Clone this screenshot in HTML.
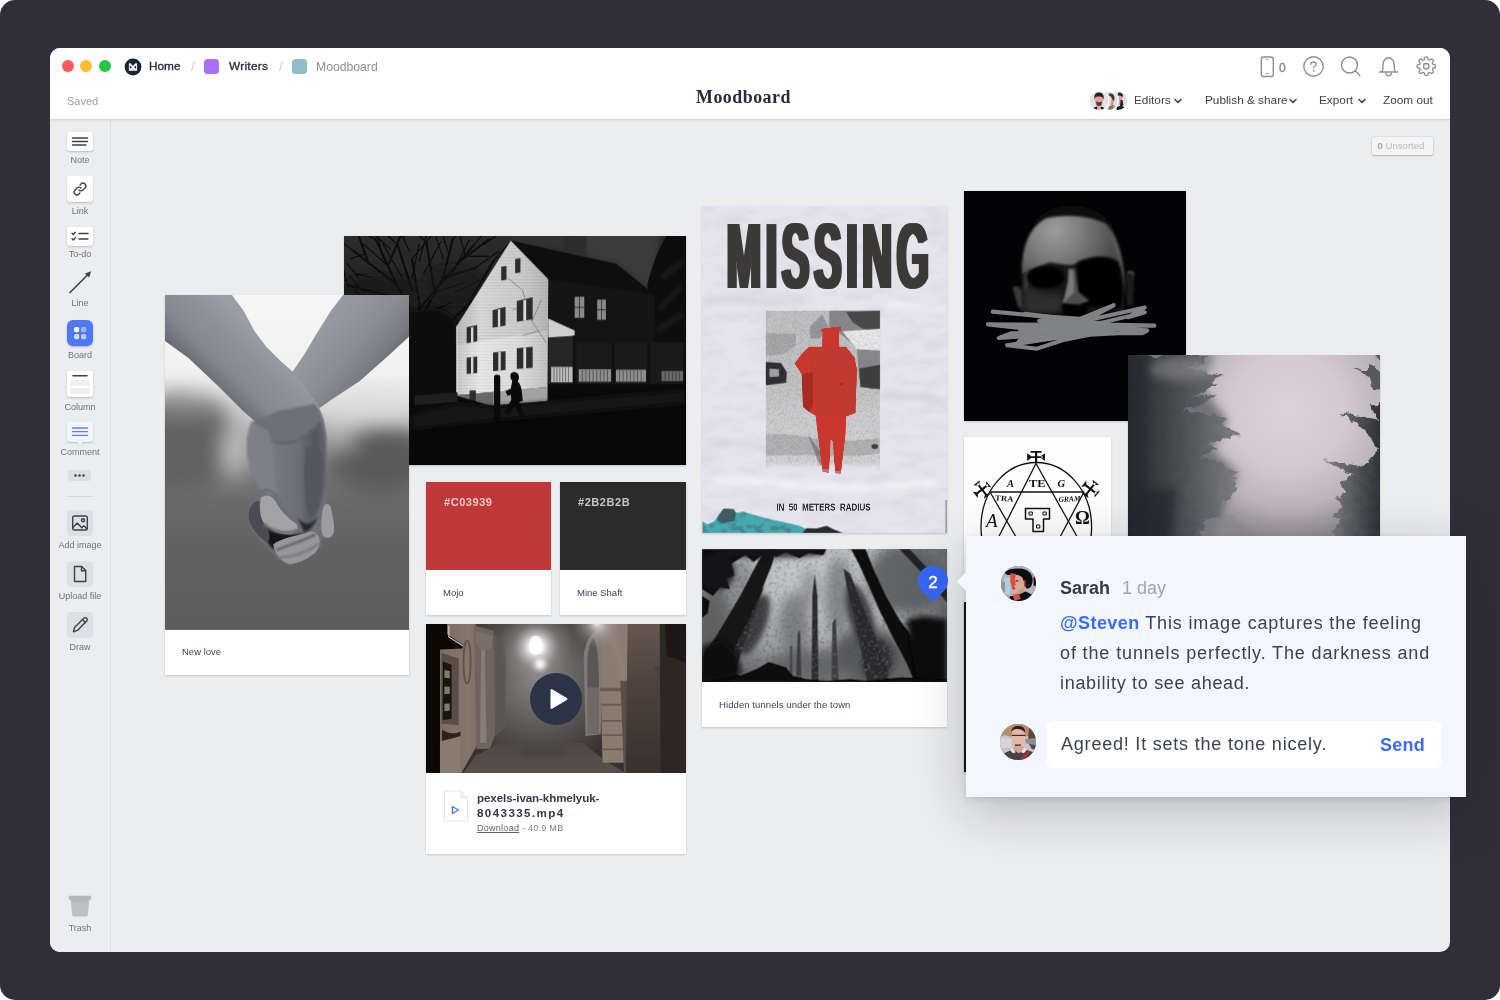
<!DOCTYPE html>
<html lang="en">
<head>
<meta charset="utf-8">
<title>Moodboard</title>
<style>
*{box-sizing:border-box;margin:0;padding:0}
html,body{width:1500px;height:1000px;overflow:hidden;background:#fff}
body{font-family:"Liberation Sans",sans-serif;color:#323b4a;position:relative}
.bg{position:absolute;left:0;top:0;width:1500px;height:1000px;background:#302e39;border-radius:15px}
.win{position:absolute;left:50px;top:48px;width:1400px;height:904px;border-radius:10px;background:#ecedef;overflow:hidden}
.abs{position:absolute}
.t{position:absolute;white-space:nowrap;line-height:1}
.t,.nav,.lbl,.uns{will-change:transform}
.hdr{position:absolute;z-index:3;left:0;top:0;width:1400px;height:72px;background:#fff;border-bottom:1px solid #d3d6da;box-shadow:0 1px 1.500px rgba(0,0,0,.05)}
.side{position:absolute;left:0;top:71px;width:61px;height:833px;border-right:1px solid #dcdde0;background:#ecedef}
.dot{position:absolute;width:12px;height:12px;border-radius:50%;top:12px}
.lbl{position:absolute;left:0;width:60px;text-align:center;font-size:9px;line-height:10px;color:#6b7280;white-space:nowrap}
.tool{position:absolute;left:17px;width:26px;background:#fff;border-radius:3px;box-shadow:0 1px 2px rgba(0,0,0,.22)}
.tool.g{background:#dfe0e3;box-shadow:none;border-radius:4px}
.card{position:absolute;background:#fff;box-shadow:0 1px 2px rgba(0,0,0,.18)}
.card svg{display:block;will-change:transform}
.nav{position:absolute;top:46px;font-size:11.8px;line-height:12px;color:#3a4150;white-space:nowrap}
</style>
</head>
<body>
<div class="bg"></div>
<div class="win">
  <!-- ===== header ===== -->
  <div class="hdr">
    <div class="dot" style="left:12px;background:#fc5b57"></div>
    <div class="dot" style="left:30px;background:#fdbc2e"></div>
    <div class="dot" style="left:49px;background:#27c840"></div>
    <svg class="abs" style="left:74px;top:9.800px" width="18" height="18" viewBox="0 0 18 18"><circle cx="9" cy="9" r="8.400" fill="#1a2338"/><path d="M4.900 5.300h1.700L9 7.900l2.400-2.600h1.700v7.500H4.900z" fill="#fff"/><path d="M5.900 7.300l2 1.900-2 1.900zM12.100 7.300l-2 1.900 2 1.900zM8.200 11.600l.8-.8.800.8z" fill="#1a2338"/></svg>
    <div class="t" id="home" style="left:99px;top:13px;font-size:11.800px;font-weight:400;-webkit-text-stroke:.35px #2b3140;color:#2b3140">Home</div>
    <div class="t" style="left:141px;top:12px;font-size:13px;color:#c9cbd0">/</div>
    <div class="abs" style="left:154px;top:11px;width:15px;height:15px;border-radius:3.5px;background:#aa6ffb"></div>
    <div class="t" id="writers" style="left:179px;top:13px;font-size:11.800px;letter-spacing:.3px;font-weight:400;-webkit-text-stroke:.35px #2b3140;color:#2b3140">Writers</div>
    <div class="t" style="left:228.500px;top:12px;font-size:13px;color:#c9cbd0">/</div>
    <div class="abs" style="left:242px;top:11px;width:15px;height:15px;border-radius:3.5px;background:#91bccb"></div>
    <div class="t" id="mb" style="left:266px;top:13px;font-size:12.2px;color:#8a8f99">Moodboard</div>
    <div class="t" id="saved" style="left:17px;top:48px;font-size:11px;color:#9da1a8">Saved</div>
    <div class="t" id="title" style="left:646px;top:40.500px;font-family:'Liberation Serif',serif;font-weight:700;font-size:17.900px;letter-spacing:.5px;color:#262c3a">Moodboard</div>
    <!-- right icons -->
    <svg class="abs" style="left:1208px;top:7px" width="180" height="24" viewBox="0 0 180 24" fill="none" stroke="#8a8f99" stroke-width="1.4" stroke-linecap="round" stroke-linejoin="round">
      <rect x="3.300" y="2" width="12" height="19.500" rx="2.200"/><path d="M8 18.600h2.600M8.500 4.600h1.600" stroke-width="1"/>
      <circle cx="55.5" cy="11.5" r="9.7"/><path d="M52.9 9.3c0-1.6 1.2-2.5 2.7-2.5s2.6.9 2.6 2.3c0 2-2.6 2-2.6 4" stroke-width="1.3"/><circle cx="55.6" cy="15.9" r=".5" fill="#8a8f99" stroke-width=".8"/>
      <circle cx="91.5" cy="10" r="8"/><path d="M97.3 15.8l4.6 4.6"/>
      <path d="M121.500 17h18.200M124 17c.8-2 1-4 1-7 0-4 2.300-7.300 5.600-7.300s5.600 3.300 5.600 7.300c0 3 .2 5 1 7"/><path d="M128 18.300a2.600 2.600 0 0 0 5.200 0"/>
    </svg>
    <svg class="abs" style="left:1365.500px;top:8.200px" width="20.500" height="20.500" viewBox="0 0 24 24" fill="none" stroke="#8a8f99" stroke-width="1.600" stroke-linecap="round" stroke-linejoin="round"><circle cx="12" cy="12" r="3.2"/><path d="M19.400 15a1.650 1.650 0 0 0 .33 1.820l.060.060a2 2 0 1 1-2.830 2.830l-.060-.060a1.650 1.650 0 0 0-1.820-.33 1.650 1.650 0 0 0-1 1.510V21a2 2 0 0 1-4 0v-.090A1.650 1.650 0 0 0 9 19.400a1.650 1.650 0 0 0-1.820.33l-.060.060a2 2 0 1 1-2.830-2.830l.060-.060a1.650 1.650 0 0 0 .33-1.820 1.650 1.650 0 0 0-1.510-1H3a2 2 0 0 1 0-4h.090A1.650 1.650 0 0 0 4.600 9a1.650 1.650 0 0 0-.33-1.820l-.060-.060a2 2 0 1 1 2.830-2.830l.060.060a1.650 1.650 0 0 0 1.820.33H9a1.650 1.650 0 0 0 1-1.510V3a2 2 0 0 1 4 0v.090a1.650 1.650 0 0 0 1 1.510 1.650 1.650 0 0 0 1.820-.33l.060-.060a2 2 0 1 1 2.830 2.830l-.060.060a1.650 1.650 0 0 0-.33 1.820V9a1.650 1.650 0 0 0 1.510 1H21a2 2 0 0 1 0 4h-.090a1.650 1.650 0 0 0-1.510 1z"/></svg>
    <div class="t" style="left:1229px;top:14px;font-size:12px;color:#7f848e;-webkit-text-stroke:.3px #7f848e">0</div>
    <!-- avatars -->
    <svg class="abs" style="left:1038px;top:42px" width="42" height="22" viewBox="0 0 42 22">
      <defs><clipPath id="ca"><circle cx="11" cy="10.700" r="9.300"/></clipPath><clipPath id="cb"><circle cx="20.400" cy="10.700" r="9.300"/></clipPath><clipPath id="cc"><circle cx="29.800" cy="10.700" r="9.300"/></clipPath>
      <filter id="avb" x="-20%" y="-20%" width="140%" height="140%"><feGaussianBlur stdDeviation=".45"/></filter></defs>
      <g clip-path="url(#cc)"><rect x="20" y="0" width="22" height="22" fill="#dcdfe6"/><g filter="url(#avb)"><path d="M30.500 2.500c2.500-.5 4.300 1 4.500 3.500l-1 1.500c-1.500-1.500-3-2-4.500-2z" fill="#2a2020"/><path d="M31 5.500c1.500 0 2.800.8 3.300 2.300l.2 5.200-1.500 2.500-2.500-.5z" fill="#e9a09a"/><path d="M32.500 10l2 0 .8 4.500-1.800 3-1.500-2z" fill="#33221f"/><path d="M29 17l4.500-1.500 3.500 2.500 1 4h-10z" fill="#1d1a1c"/></g></g>
      <circle cx="20.400" cy="10.700" r="10.300" fill="#fff"/>
      <g clip-path="url(#cb)"><rect x="10" y="0" width="22" height="22" fill="#dcdfe6"/><g filter="url(#avb)"><path d="M21.500 3.500c3-.5 5 1.500 5 4.500l-.5 3-1.500 0c-.5-3-1.500-5-4-6z" fill="#4a3228"/><path d="M23.500 9.500l2 .5 0 3.500-1 2.500-2-1z" fill="#d99880"/><path d="M21 16.500l4-1.500 4.500 3 .5 4h-10z" fill="#8a6a5a"/><path d="M25 16l4 2 1 4h-3z" fill="#cfd2d8"/></g></g>
      <circle cx="11" cy="10.700" r="10.300" fill="#fff"/>
      <g clip-path="url(#ca)"><rect x="0" y="0" width="22" height="22" fill="#e0e3ea"/><g filter="url(#avb)"><path d="M6.300 8c-.3-3.500 1.700-5.500 4.700-5.500s5 2 4.700 5.500l-.7 2-8 0z" fill="#2b2121"/><path d="M6.800 7.500c1.500-1.500 6.500-1.500 8 0l.2 4.500-1.500 3.500-2.500 1.300-2.500-1.300-1.500-3.500z" fill="#ec9f9a"/><path d="M8 11.500c2 .8 4 .8 6 0l-.7 3.700-2.300 1.300-2.300-1.300z" fill="#5a3a34"/><path d="M9 16h4v4h-4z" fill="#eeb0aa"/><path d="M4 21c.5-3 3-4 5-4.500l2 2 2-2c2 .5 4.500 1.500 5 4.500z" fill="#1c191b"/><path d="M9.300 16.500l1.700 2 1.700-2 .3 5h-4z" fill="#f0b8b2"/></g></g>
    </svg>
    <div class="nav" id="n1" style="left:1084px">Editors</div>
    <div class="nav" id="n2" style="left:1155px">Publish &amp; share</div>
    <div class="nav" id="n3" style="left:1269px">Export</div>
    <div class="nav" id="n4" style="left:1333px">Zoom out</div>
    <svg class="abs" style="left:1123px;top:49px" width="10" height="8" viewBox="0 0 10 8" fill="none" stroke="#3a4150" stroke-width="1.6" stroke-linecap="round" stroke-linejoin="round"><path d="M2 2.500l3 3 3-3"/></svg>
    <svg class="abs" style="left:1238px;top:49px" width="10" height="8" viewBox="0 0 10 8" fill="none" stroke="#3a4150" stroke-width="1.6" stroke-linecap="round" stroke-linejoin="round"><path d="M2 2.500l3 3 3-3"/></svg>
    <svg class="abs" style="left:1307px;top:49px" width="10" height="8" viewBox="0 0 10 8" fill="none" stroke="#3a4150" stroke-width="1.6" stroke-linecap="round" stroke-linejoin="round"><path d="M2 2.500l3 3 3-3"/></svg>
  </div>

  <!-- ===== sidebar ===== -->
  <div class="side" id="side">

    <!-- offsets: sidebar top = 119 abs, so y_rel = y_abs-119 -->
    <div class="tool" style="top:13px;height:19px"><svg width="26" height="19" viewBox="0 0 26 19" fill="none" stroke="#3a4150" stroke-width="1.400" stroke-linecap="round"><path d="M5.500 6h15M5.500 9.500h15M5.500 13h13.500"/></svg></div>
    <div class="lbl" style="top:36px">Note</div>
    <div class="tool" style="top:57px;height:26px"><svg width="26" height="26" viewBox="0 0 26 26" fill="none" stroke="#3a4150" stroke-width="1.500" stroke-linecap="round" stroke-linejoin="round"><g transform="translate(13 13) scale(.9) translate(-13 -13)"><path d="M11.800 14.200a3.100 3.100 0 0 0 4.400 0l2.300-2.300a3.100 3.100 0 0 0-4.400-4.400l-1 1"/><path d="M14.200 11.800a3.100 3.100 0 0 0-4.400 0l-2.300 2.300a3.100 3.100 0 0 0 4.400 4.400l1-1"/></g></svg></div>
    <div class="lbl" style="top:87px">Link</div>
    <div class="tool" style="top:108px;height:19px"><svg width="26" height="19" viewBox="0 0 26 19" fill="none" stroke="#3a4150" stroke-width="1.400" stroke-linecap="round" stroke-linejoin="round"><path d="M5 6.200l1.300 1.300 2-2.300M5 11.700l1.300 1.300 2-2.300M12 6.500h9M12 12h9"/></svg></div>
    <div class="lbl" style="top:130px">To-do</div>
    <svg class="abs" style="left:17px;top:150px" width="26" height="26" viewBox="0 0 26 26" fill="none" stroke="#3a4150" stroke-width="1.600" stroke-linecap="round"><path d="M3 23.500L22 4.500"/><path d="M24.200 2.300l-6.300 2.100 4.200 4.200z" fill="#3a4150" stroke="none"/></svg>
    <div class="lbl" style="top:179px">Line</div>
    <div class="tool" style="top:201px;height:26px;background:#4f78f6;border-radius:6px;box-shadow:0 1px 2px rgba(40,70,200,.35)"><svg width="26" height="26" viewBox="0 0 26 26"><rect x="7" y="7" width="5.200" height="5.200" rx="1.600" fill="#fff"/><rect x="14" y="7" width="5.200" height="5.200" rx="1.600" fill="#fff" opacity=".45"/><rect x="7" y="14" width="5.200" height="5.200" rx="1.600" fill="#fff" opacity=".75"/><rect x="14" y="14" width="5.200" height="5.200" rx="1.600" fill="#fff" opacity=".6"/></svg></div>
    <div class="lbl" style="top:231px">Board</div>
    <div class="tool" style="top:252px;height:26px"><svg width="26" height="26" viewBox="0 0 26 26"><path d="M6 4.700h14" stroke="#3a4150" stroke-width="1.400" stroke-linecap="round"/><rect x="3.500" y="9" width="19" height="6" fill="#eeeff1"/><rect x="3.500" y="17" width="19" height="6" fill="#eeeff1"/></svg></div>
    <div class="lbl" style="top:283px">Column</div>
    <div class="tool" style="top:303px;height:20px;background:#f3f6ff"><svg width="26" height="24" viewBox="0 0 26 24" style="overflow:visible"><path d="M10.500 20h5l-2.500 2.600z" fill="#f3f6ff"/><path d="M5.500 6h15M5.500 9.700h15M5.500 13.400h15" stroke="#5b7ff5" stroke-width="1.300" stroke-linecap="round"/></svg></div>
    <div class="lbl" style="top:328px">Comment</div>
    <div class="abs" style="left:18px;top:351px;width:23px;height:11px;border-radius:3px;background:#dddee1"><svg style="display:block" width="23" height="11" viewBox="0 0 23 11" fill="#3a4150"><circle cx="7.500" cy="5.500" r="1.250"/><circle cx="11.500" cy="5.500" r="1.250"/><circle cx="15.500" cy="5.500" r="1.250"/></svg></div>
    <div class="abs" style="left:17px;top:377px;width:26px;height:1px;background:#d6d8db"></div>
    <div class="tool g" style="top:391px;height:26px"><svg width="26" height="26" viewBox="0 0 26 26" fill="none" stroke="#3a4150" stroke-width="1.400" stroke-linecap="round" stroke-linejoin="round"><rect x="5.700" y="6" width="14.600" height="14" rx="2"/><circle cx="16" cy="10.300" r="1.500"/><path d="M5.900 17.500l4.300-4.600 4.600 4.800 2-1.900 3.300 3.200"/></svg></div>
    <div class="lbl" style="top:421px">Add image</div>
    <div class="tool g" style="top:442px;height:26px"><svg width="26" height="26" viewBox="0 0 26 26" fill="none" stroke="#3a4150" stroke-width="1.400" stroke-linecap="round" stroke-linejoin="round"><path d="M7.500 5.500h7.200l4 4v11h-11.200z"/><path d="M14.500 5.700v4h4"/></svg></div>
    <div class="lbl" style="top:472px">Upload file</div>
    <div class="tool g" style="top:493px;height:26px"><svg width="26" height="26" viewBox="0 0 26 26" fill="none" stroke="#3a4150" stroke-width="1.400" stroke-linecap="round" stroke-linejoin="round"><path d="M6.500 19.800l1-4.300 9.300-9.300a2 2 0 0 1 2.900 2.900l-9.300 9.300z"/><path d="M15.500 7.600l2.900 2.900"/></svg></div>
    <div class="lbl" style="top:523px">Draw</div>
    <svg class="abs" style="left:18px;top:776px" width="24" height="23" viewBox="0 0 24 23"><path d="M2.600 4.200h18.800l-1.500 15.600a2 2 0 0 1-2 1.700H6.100a2 2 0 0 1-2-1.700z" fill="#bbbfc6"/><rect x=".8" y=".8" width="22.400" height="4" rx=".8" fill="#b2b6bd"/><path d="M2.700 5.600c5 .6 10 .5 17-.7" stroke="#a9adb5" stroke-width=".8" fill="none"/></svg>
    <div class="lbl" style="top:804px">Trash</div>
  </div>

  <!-- unsorted -->
  <div class="abs uns" style="left:1321.500px;top:88.500px;width:61px;height:18px;border-radius:2.500px;background:#f4f4f5;box-shadow:0 1px 2px rgba(0,0,0,.22),0 0 0 .5px rgba(0,0,0,.08);font-size:9.600px;line-height:17px;padding-left:5.500px;color:#b9bcc2;white-space:nowrap"><b style="color:#a4a8ae">0</b> Unsorted</div>

  <!-- ===== canvas cards ===== -->
  <div id="canvas">

    <!-- coordinates inside .win : x_abs-50 , y_abs-48 -->
    <!-- house photo -->
    <div class="card" id="house" style="left:294px;top:188px;width:342px;height:229px;background:#0b0b0b"><svg class="abs" style="left:0;top:0" width="342" height="229" viewBox="17 25 1424.800 954" preserveAspectRatio="none">
<defs>
<linearGradient id="hsky" x1="0" y1="25" x2="0" y2="700" gradientUnits="userSpaceOnUse"><stop offset="0" stop-color="#2b2b2b"/><stop offset=".35" stop-color="#242424"/><stop offset=".7" stop-color="#111"/><stop offset="1" stop-color="#0a0a0a"/></linearGradient>
<linearGradient id="hfac" x1="487" y1="0" x2="868" y2="0" gradientUnits="userSpaceOnUse"><stop offset="0" stop-color="#c9c9c9"/><stop offset=".25" stop-color="#e9e9e9"/><stop offset=".7" stop-color="#dcdcdc"/><stop offset="1" stop-color="#c4c4c4"/></linearGradient>
<filter id="hsb" filterUnits="userSpaceOnUse" x="-100" y="-100" width="1700" height="1200"><feGaussianBlur stdDeviation="1.800"/></filter>
<filter id="hsb8" filterUnits="userSpaceOnUse" x="-100" y="-100" width="1700" height="1200"><feGaussianBlur stdDeviation="12"/></filter>
<pattern id="hsid" width="20" height="13" patternUnits="userSpaceOnUse"><rect width="20" height="13" fill="none"/><rect y="11" width="20" height="2" fill="#000" opacity=".13"/></pattern>
</defs>
<rect x="17" y="25" width="1425" height="954" fill="url(#hsky)"/>
<!-- lighter sky right -->
<path d="M1020 0H1340L1290 250 1150 140 1025 112z" fill="#3a3a3a" filter="url(#hsb8)"/><path d="M720 0H940V90L720 45z" fill="#303030" filter="url(#hsb8)"/>
<!-- tree branches -->
<g stroke="#090909" fill="none" stroke-linecap="round" filter="url(#hsb)">
<path d="M335 720C330 600 338 450 330 300L300 120M330 420L200 150 150 40M330 380L430 200 470 40M300 250L240 60M330 330L560 60M395 260L360 50M240 230L60 90M270 290L30 230M200 150L250 30M120 140L80 30M430 200L560 160M500 130L620 40M330 480L520 330 640 130M330 520L150 330 40 300M440 400L600 250" stroke-width="8"/>
<path d="M335 720V420" stroke-width="22"/>
<path d="M150 40L120 25M470 40L480 25M560 60L590 25M60 90L20 60M250 30L270 25M200 150L100 60M360 50L330 25M240 60L200 25M395 260L520 220M30 230L17 170M640 130L700 60M520 330L600 300M80 200L30 140M180 120L160 30M300 120L380 25M430 120L400 30M520 100L500 25M330 560L460 470M150 330L60 250M100 260L40 190M260 200L180 60M300 200L330 60M350 180L420 50M470 180L540 40M560 160L660 90M480 260L580 210M400 330L470 300M230 330L120 300M45 120L100 100M140 200L60 180M600 60L650 25M540 110L620 110M210 80L150 25M290 90L260 25M330 130L360 25M450 90L430 25" stroke-width="4.500"/>
</g>
<!-- dark tree mass left-low -->
<g filter="url(#hsb8)"><path d="M17 360C60 330 120 300 200 330 250 300 300 330 330 335 380 310 430 330 470 360L490 400V700H17z" fill="#0c0c0c"/>
<ellipse cx="170" cy="250" rx="170" ry="70" fill="#121212" opacity=".55"/><ellipse cx="470" cy="230" rx="130" ry="90" fill="#121212" opacity=".5"/></g>
<!-- right tree -->
<path d="M1442 25V470H1290C1270 380 1300 300 1280 230C1300 150 1330 70 1360 25z" fill="#101010" filter="url(#hsb)"/>
<path d="M1330 330L1420 240M1340 200L1430 130M1320 420L1430 350" stroke="#2c2c2c" stroke-width="10" filter="url(#hsb8)"/>
<!-- roof & right body -->
<path d="M712 45L1020 112 1150 140 1310 268 1310 460 868 470 868 205z" fill="#0e0e0e"/>
<path d="M868 205L1310 268V640H868z" fill="#141414"/>
<path d="M940 30H1025V113L940 94z" fill="#2d2d2d"/>
<!-- right windows -->
<g fill="#8a8a8a"><rect x="978" y="278" width="40" height="88"/><rect x="1072" y="290" width="36" height="84"/></g>
<g stroke="#1a1a1a" stroke-width="3"><path d="M978 322h40M998 278v88M1072 332h36M1090 290v84"/></g>
<g fill="#3c3c3c"><rect x="990" y="490" width="24" height="82"/><rect x="1078" y="496" width="30" height="76"/><rect x="1225" y="506" width="28" height="66"/></g>
<!-- porch interior -->
<path d="M868 448L975 440V640H868z" fill="#262626"/>
<path d="M985 470H1430V640H985z" fill="#1a1a1a"/>
<!-- facade -->
<path d="M712 45L868 205 865 655 487 688V400z" fill="url(#hfac)"/>
<path d="M712 45L868 205 865 655 487 688V400z" fill="url(#hsid)"/>
<path d="M712 45L868 205 866 420 487 480V400z" fill="#000" opacity=".07"/>
<!-- branch shadows on facade -->
<g stroke="#555" stroke-width="4" fill="none" opacity=".55" filter="url(#hsb)"><path d="M860 470L800 380 760 250 700 200M800 380L840 290M780 320L720 330M830 420L760 440"/></g>
<!-- porch roof lit -->
<path d="M868 368L978 418V440L868 448z" fill="#cfcfcf"/>
<!-- foundation -->
<path d="M487 688L865 655V712L640 730 487 722z" fill="#a2a2a2"/><path d="M487 688L640 675V730L487 722z" fill="#000" opacity=".35"/>
<path d="M487 400V722" stroke="#eee" stroke-width="4"/>
<!-- porch railings -->
<g fill="#bdbdbd"><rect x="880" y="570" width="90" height="64"/></g>
<g fill="#8d8d8d"><rect x="995" y="580" width="135" height="52"/><rect x="1150" y="582" width="125" height="50"/></g>
<rect x="1340" y="587" width="90" height="42" fill="#6a6a6a"/>
<g stroke="#222" stroke-width="3" opacity=".7"><path d="M892 572v60M904 572v60M916 572v60M928 572v60M940 572v60M952 572v60M1010 582v50M1025 582v50M1040 582v50M1055 582v50M1070 582v50M1085 582v50M1100 582v50M1115 582v50M1165 584v48M1180 584v48M1195 584v48M1210 584v48M1225 584v48M1240 584v48M1255 584v48M1355 588v40M1370 588v40M1385 588v40M1400 588v40M1415 588v40"/></g>
<g fill="#101010"><rect x="970" y="440" width="12" height="200"/><rect x="1132" y="470" width="14" height="170"/><rect x="1280" y="470" width="14" height="170"/></g>
<!-- facade windows -->
<g fill="#2c2c2c">
<rect x="672" y="152" width="22" height="58" transform="skewY(-8) translate(0 95)"/>
<rect x="730" y="120" width="22" height="60" transform="skewY(-8) translate(0 103)"/>
<path d="M528 405L572 396V463L528 472zM636 334L690 320V398L636 407zM737 296L803 280V372L737 382z"/>
<path d="M528 532L572 527V596L528 600zM638 510L690 505V583L638 588zM737 492L803 486V574L737 579z"/>
<rect x="540" y="668" width="26" height="52"/>
</g>
<g fill="#d8d8d8"><path d="M546 406L556 404V466L546 468zM658 332L668 330V402L658 404zM764 292L776 289V376L764 378zM546 531L556 530V597L546 598zM660 509L670 508V585L660 586zM764 490L776 489V576L764 577z"/></g>
<!-- ground -->
<path d="M17 700L487 690 640 735 865 712 1442 640V979H17z" fill="#0b0b0b"/>
<path d="M300 770C600 740 1000 720 1442 690V979H300z" fill="#080808"/>
<path d="M300 770L487 725 640 738 865 716 1442 668V720C1000 760 600 790 300 830z" fill="#191919" filter="url(#hsb8)"/>
<!-- fence -->
<path d="M310 690L490 676V715L310 730z" fill="#1f1f1f"/>
<!-- post and figure -->
<rect x="642" y="603" width="26" height="192" rx="9" fill="#0a0a0a"/>
<path d="M722 592c14-2 24 8 24 22 0 8-3 13-6 16 10 8 16 24 18 46l4 36-14 4 0 6 22 52-16 6-26-52-22 40-22-8 30-52-2-22-14 4-8-18 22-12 6-32c-6-6-8-12-8-20 0-10 6-16 12-16z" fill="#0a0a0a"/>
</svg></div>
    <!-- hands card -->
    <div class="card" id="hands" style="left:115px;top:247px;width:244px;height:380px"><svg class="abs" style="left:0;top:0" width="244" height="334.700" viewBox="15 15 717.600 982.300" preserveAspectRatio="none">
<defs>
<linearGradient id="hbg" x1="0" y1="15" x2="0" y2="997" gradientUnits="userSpaceOnUse">
<stop offset="0" stop-color="#f6f6f6"/><stop offset=".24" stop-color="#f1f1f1"/><stop offset=".31" stop-color="#e2e2e2"/><stop offset=".375" stop-color="#c2c2c2"/><stop offset=".44" stop-color="#959595"/><stop offset=".53" stop-color="#787878"/><stop offset=".62" stop-color="#6a6a6a"/><stop offset=".75" stop-color="#626262"/><stop offset="1" stop-color="#5c5c5c"/>
</linearGradient>
<linearGradient id="harmL" x1="120" y1="290" x2="285" y2="120" gradientUnits="userSpaceOnUse">
<stop offset="0" stop-color="#484a53"/><stop offset=".12" stop-color="#686a73"/><stop offset=".4" stop-color="#868891"/><stop offset=".75" stop-color="#90929b"/><stop offset="1" stop-color="#9c9ea7"/>
</linearGradient>
<linearGradient id="harmR" x1="470" y1="110" x2="640" y2="260" gradientUnits="userSpaceOnUse">
<stop offset="0" stop-color="#989aa3"/><stop offset=".5" stop-color="#8b8d96"/><stop offset=".85" stop-color="#787a83"/><stop offset="1" stop-color="#62646d"/>
</linearGradient>
<linearGradient id="hback" x1="260" y1="0" x2="560" y2="0" gradientUnits="userSpaceOnUse"><stop offset="0" stop-color="#787982"/><stop offset=".5" stop-color="#6c6d74"/><stop offset=".8" stop-color="#55565e"/><stop offset="1" stop-color="#62636b"/></linearGradient>
<filter id="hb30" filterUnits="userSpaceOnUse" x="-200" y="-200" width="1200" height="1500"><feGaussianBlur stdDeviation="32"/></filter>
<filter id="hb2" filterUnits="userSpaceOnUse" x="-100" y="-100" width="1000" height="1300"><feGaussianBlur stdDeviation="1.400"/></filter>
<filter id="hb4" filterUnits="userSpaceOnUse" x="-100" y="-100" width="1200" height="1400"><feGaussianBlur stdDeviation="6"/></filter>
<filter id="hb9" filterUnits="userSpaceOnUse" x="-100" y="-100" width="1200" height="1400"><feGaussianBlur stdDeviation="12"/></filter>
</defs>
<rect x="15" y="15" width="718" height="983" fill="url(#hbg)"/>
<g filter="url(#hb30)">
<ellipse cx="50" cy="450" rx="175" ry="150" fill="#626262"/>
<ellipse cx="650" cy="500" rx="155" ry="100" fill="#5a5a5a"/>
<ellipse cx="222" cy="470" rx="34" ry="80" fill="#c4c4c4"/>
<ellipse cx="610" cy="345" rx="130" ry="40" fill="#dedede"/>
<ellipse cx="535" cy="425" rx="36" ry="40" fill="#b8b8b8"/>
<ellipse cx="70" cy="335" rx="120" ry="30" fill="#8c8c8c"/>
</g>
<g filter="url(#hb2)">
<path d="M539 15H733V137L670 195 587 268 503 323 470 347 425 300 390 240 425 189 458 133 503 61z" fill="url(#harmR)"/>
<path d="M15 15H212L246 61 279 122 313 167 358 212 391 240 430 290 464 335 482 380 492 440 440 470 335 440 313 413 279 385 246 357 168 279 84 200 15 150z" fill="url(#harmL)"/>
</g>
<!-- hand detail in 5.555-zoom coords -->
<g transform="translate(191.200 323.500) scale(.5294)">
<g filter="url(#hb4)">
<path d="M150 120C120 180 115 260 130 330 150 420 180 470 195 500 170 540 125 600 130 660 140 720 200 780 260 840 300 880 340 915 370 912 430 900 500 860 535 800L548 762 590 768C612 740 600 680 585 620 565 570 555 520 556 470 566 380 568 270 560 180 555 130 535 70 500 20L300 60z" fill="#6e6f77"/>
<path d="M150 120C120 180 115 260 130 330 150 420 180 470 200 505L300 540 285 400 262 230 240 170z" fill="#7f8087"/>
<path d="M260 225C330 250 440 230 530 120 560 180 568 300 556 470 550 560 520 650 440 705 400 660 330 610 295 530 275 420 262 300 260 225z" fill="url(#hback)"/>
<path d="M450 260C500 240 540 260 548 330 552 450 530 590 470 660 440 560 430 400 450 260z" fill="#55565d"/>
<path d="M215 670C300 750 400 750 450 730 390 765 300 800 270 830 225 790 200 730 215 670z" fill="#141418"/>
<path d="M400 650C440 690 470 700 520 640 500 700 470 730 440 735z" fill="#2a2a2f"/>
</g>
<g filter="url(#hb2)">
<path d="M200 540C230 520 260 525 280 560 310 620 370 670 400 690 412 710 400 735 370 742 320 750 260 730 220 690 195 650 190 590 200 540z" fill="#a2a2a7"/>
<path d="M135 610C150 570 175 555 192 560 188 620 200 670 235 710 250 740 255 770 235 790 200 770 160 730 138 680 130 650 130 630 135 610z" fill="#4c4c52"/>
<path d="M268 800C300 770 400 750 450 738 480 722 505 725 520 755 535 790 520 830 495 852 450 885 400 905 365 910 320 900 280 860 268 800z" fill="#97979c"/>
<path d="M545 600C550 570 580 565 590 600 600 650 612 700 604 735 590 770 560 770 545 750 530 720 535 650 545 600z" fill="#9c9ca1"/>
</g>
<g filter="url(#hb4)" fill="none" stroke-linecap="round">
<path d="M220 690C270 735 350 748 402 722" stroke="#6a6a70" stroke-width="16"/>
<path d="M290 830C360 800 440 780 500 745" stroke="#4a4a50" stroke-width="9"/>
<path d="M300 872C380 870 460 840 515 800" stroke="#77777c" stroke-width="14"/>
<path d="M262 228C330 255 440 235 528 125" stroke="#5f6068" stroke-width="10"/>
<path d="M200 505C230 490 260 500 290 530" stroke="#5d5e65" stroke-width="9"/>
</g>
</g>
</svg>
      <div class="t" style="left:17px;top:352px;font-size:9.500px;color:#3c4350">New love</div>
    </div>
    <!-- swatches -->
    <div class="card" style="left:376px;top:434px;width:125px;height:133px">
      <div class="abs" style="left:0;top:0;width:125px;height:88px;background:#c03939"></div>
      <div class="t" style="left:18px;top:15px;font-size:11px;font-weight:700;color:rgba(255,255,255,.72);letter-spacing:.55px">#C03939</div>
      <div class="t" style="left:17px;top:106px;font-size:9.500px;color:#3c4350">Mojo</div>
    </div>
    <div class="card" style="left:510px;top:434px;width:126px;height:133px">
      <div class="abs" style="left:0;top:0;width:126px;height:88px;background:#2b2b2b"></div>
      <div class="t" style="left:18px;top:15px;font-size:11px;font-weight:700;color:rgba(255,255,255,.72);letter-spacing:.55px">#2B2B2B</div>
      <div class="t" style="left:17px;top:106px;font-size:9.500px;color:#3c4350">Mine Shaft</div>
    </div>
    <!-- video card -->
    <div class="card" id="video" style="left:376px;top:576px;width:260px;height:230px"><svg class="abs" style="left:0;top:0" width="260" height="149" viewBox="22 22 1455 836" preserveAspectRatio="none">
<defs>
<radialGradient id="vfog" cx="650" cy="330" r="520" gradientUnits="userSpaceOnUse"><stop offset="0" stop-color="#8b8786"/><stop offset=".35" stop-color="#6b6766"/><stop offset=".7" stop-color="#4e4a49"/><stop offset="1" stop-color="#38302e"/></radialGradient>
<radialGradient id="vlamp" cx="638" cy="150" r="210" gradientUnits="userSpaceOnUse"><stop offset="0" stop-color="#fff"/><stop offset=".16" stop-color="#fff"/><stop offset=".3" stop-color="#e8e6e6" stop-opacity=".75"/><stop offset=".6" stop-color="#b0acac" stop-opacity=".3"/><stop offset="1" stop-color="#8b8786" stop-opacity="0"/></radialGradient>
<radialGradient id="vlamp2" cx="660" cy="247" r="60" gradientUnits="userSpaceOnUse"><stop offset="0" stop-color="#fff"/><stop offset=".35" stop-color="#f0eeee" stop-opacity=".8"/><stop offset="1" stop-color="#aaa" stop-opacity="0"/></radialGradient>
<radialGradient id="vlamp3" cx="980" cy="22" r="140" gradientUnits="userSpaceOnUse"><stop offset="0" stop-color="#f2eeee"/><stop offset=".4" stop-color="#b5aeac" stop-opacity=".6"/><stop offset="1" stop-color="#8b8786" stop-opacity="0"/></radialGradient>
<linearGradient id="vwallL" x1="100" y1="0" x2="420" y2="0" gradientUnits="userSpaceOnUse"><stop offset="0" stop-color="#7d6c62"/><stop offset=".5" stop-color="#85756c"/><stop offset="1" stop-color="#6a605c"/></linearGradient>
<linearGradient id="vfloor" x1="0" y1="680" x2="0" y2="858" gradientUnits="userSpaceOnUse"><stop offset="0" stop-color="#4c4645"/><stop offset="1" stop-color="#5a4f49"/></linearGradient>
<filter id="vb3" filterUnits="userSpaceOnUse" x="-100" y="-100" width="1700" height="1100"><feGaussianBlur stdDeviation="3.500"/></filter>
<filter id="vb12" filterUnits="userSpaceOnUse" x="-100" y="-100" width="1700" height="1100"><feGaussianBlur stdDeviation="14"/></filter>
<linearGradient id="vwr" x1="0" y1="22" x2="0" y2="858" gradientUnits="userSpaceOnUse"><stop offset="0" stop-color="#65564f"/><stop offset=".45" stop-color="#4c403b"/><stop offset="1" stop-color="#3a302c"/></linearGradient>
</defs>
<rect x="22" y="22" width="1455" height="836" fill="url(#vfog)"/>
<!-- floor -->
<path d="M300 760L440 690H900L1010 780 1140 858H230z" fill="url(#vfloor)" filter="url(#vb3)"/>
<path d="M560 740H790" stroke="#3a3433" stroke-width="14" filter="url(#vb12)"/>
<!-- left wall -->
<g filter="url(#vb3)">
<path d="M100 22H300L310 700 220 858H100z" fill="url(#vwallL)"/>
<path d="M290 30L400 60 410 640 380 720 305 725z" fill="#6f645f"/>
<path d="M330 170L352 160 360 690H325z" fill="#8a7c74"/>
<path d="M300 60L395 90 390 160 330 170 300 120z" fill="#7a6e68"/>
<path d="M400 80L470 140 465 600 410 650z" fill="#5c5655"/>
<ellipse cx="252" cy="235" rx="20" ry="120" fill="none" stroke="#5f534c" stroke-width="10"/>
<!-- window -->
<path d="M108 185L205 215V590L108 580z" fill="#5a4d46"/>
<path d="M116 232L165 250V555L116 560z" fill="#16120f"/>
<path d="M125 280l30 6v40l-30-2zM125 372l30 2v40l-30 2zM125 470l30-2v40l-30 4z" fill="#7d7a78"/>
<path d="M112 615C150 640 190 640 215 625V650L112 680z" fill="#2a221e"/>
<path d="M100 680L215 655V858H100z" fill="#8a7a70"/>
</g>
<!-- far-left black -->
<path d="M22 22H140V80L232 140 225 160 100 165V858H22z" fill="#0a0807"/>
<path d="M150 30V95L230 145" stroke="#c9c5c2" stroke-width="7" fill="none"/>
<!-- right arches -->
<g filter="url(#vb3)">
<path d="M905 240C900 120 950 70 1010 30L1000 640 915 650z" fill="#7f7978"/>
<path d="M925 250C925 150 950 110 960 95 975 130 990 190 990 380H925z" fill="#5a5758"/>
<path d="M925 380H990V640H925z" fill="#6e6968"/>
<path d="M1000 22H1165L1150 340 1130 800H1010L1000 400z" fill="#8b7b71"/>
<path d="M995 380H1140V400H995zM1000 470H1135V480H1000zM1005 560H1132V570H1005zM1008 640H1130V650H1008zM1010 720H1130V730H1010z" fill="#6a5c54"/>
<path d="M1110 340H1160L1150 858H1130z" fill="#5a4d46"/>
<path d="M1150 22H1340V858H1140z" fill="url(#vwr)"/>
<path d="M1300 260L1477 245V340L1330 350z" fill="#4a3f3a"/>
<path d="M1330 22H1477V858H1335z" fill="#2e2523"/>
<path d="M1360 22H1477V240L1370 200z" fill="#1c1513"/>
</g>
<path d="M1000 30C1060 80 1120 200 1130 340" stroke="#a09088" stroke-width="14" fill="none" filter="url(#vb12)" opacity=".6"/>
<!-- lamp glows -->
<rect x="22" y="22" width="1455" height="836" fill="url(#vlamp)"/>
<rect x="22" y="22" width="1455" height="836" fill="url(#vlamp3)"/>
<rect x="22" y="22" width="1455" height="836" fill="url(#vlamp2)"/>
<ellipse cx="636" cy="140" rx="36" ry="52" fill="#fff" filter="url(#vb3)"/>
</svg>
      <div class="abs" style="left:104px;top:49px;width:52px;height:52px;border-radius:50%;background:#2b3447"></div>
      <svg class="abs" style="left:104px;top:49px" width="52" height="52" viewBox="0 0 52 52"><path d="M20.500 17.200v17.600a1 1 0 0 0 1.500.9l14.800-8.800a1 1 0 0 0 0-1.800l-14.800-8.800a1 1 0 0 0-1.500.9z" fill="#fff"/></svg>
      <svg class="abs" style="left:17px;top:166px" width="26" height="32" viewBox="0 0 26 32"><path d="M1.500 1h16.500l6.500 6.500v23.500h-23z" fill="#fff" stroke="#e3e5e9" stroke-width="1"/><path d="M18 1v6.500h6.500" fill="#f3f4f6" stroke="#e3e5e9" stroke-width="1"/><path d="M9.400 16.500v7l6-3.500z" fill="none" stroke="#4a74f5" stroke-width="1.300" stroke-linejoin="round"/></svg>
      <div class="t" id="fn1" style="left:51px;top:168px;font-size:11.600px;letter-spacing:-.1px;font-weight:700;color:#323846">pexels-ivan-khmelyuk-</div>
      <div class="t" id="fn2" style="left:51px;top:183px;font-size:11.600px;letter-spacing:1.4px;font-weight:700;color:#323846">8043335.mp4</div>
      <div class="t" id="dl" style="left:51px;top:200px;font-size:9px;letter-spacing:.27px;color:#7d828c"><span style="text-decoration:underline;color:#5d6370">Download</span> - 40.9 MB</div>
    </div>
    <!-- missing poster -->
    <div class="card" id="poster" style="left:652px;top:158px;width:245px;height:327px;background:#e3e1e9"><svg class="abs" style="left:0;top:0" width="245" height="327" viewBox="33 32 702 933" preserveAspectRatio="none">
<defs>
<filter id="pb2" filterUnits="userSpaceOnUse" x="-100" y="-100" width="1000" height="1200"><feGaussianBlur stdDeviation="2"/></filter>
<filter id="pb8" filterUnits="userSpaceOnUse" x="-100" y="-100" width="1000" height="1200"><feGaussianBlur stdDeviation="9"/></filter>
<filter id="ptex" x="0" y="0" width="100%" height="100%"><feTurbulence type="fractalNoise" baseFrequency=".012 .03" numOctaves="3" seed="4" result="n"/><feColorMatrix in="n" type="matrix" values="0 0 0 0 .45  0 0 0 0 .43  0 0 0 0 .5  0 0 0 -1.600 .95"/></filter>
<filter id="pgrain" x="0" y="0" width="100%" height="100%"><feTurbulence type="fractalNoise" baseFrequency=".35" numOctaves="2" seed="9" result="n"/><feColorMatrix in="n" type="matrix" values="0 0 0 0 .1  0 0 0 0 .1  0 0 0 0 .1  0 0 0 -2.200 1.250"/><feComposite in2="SourceGraphic" operator="in"/></filter>
<linearGradient id="pph" x1="0" y1="330" x2="0" y2="800" gradientUnits="userSpaceOnUse"><stop offset="0" stop-color="#c4c4c6"/><stop offset=".3" stop-color="#cfcfd1"/><stop offset=".6" stop-color="#d2d2d4"/><stop offset="1" stop-color="#dddce1"/></linearGradient>
<filter id="pdil" filterUnits="userSpaceOnUse" x="60" y="40" width="680" height="270"><feMorphology operator="dilate" radius="7 0"/></filter>
<filter id="pgrain2" x="0" y="0" width="100%" height="100%"><feTurbulence type="fractalNoise" baseFrequency=".018 .024" numOctaves="3" seed="5" result="n"/><feColorMatrix in="n" type="matrix" values="0 0 0 0 .08  0 0 0 0 .12  0 0 0 0 .14  0 0 0 6 -3.100"/><feComposite in2="SourceGraphic" operator="in"/></filter>
</defs>
<rect x="33" y="32" width="702" height="933" fill="#e6e4ec"/>
<rect x="33" y="32" width="702" height="933" filter="url(#ptex)" opacity=".28"/>
<!-- soft wrinkles -->
<g filter="url(#pb8)" opacity=".55"><path d="M40 300C150 280 200 330 330 300" stroke="#c4c1cc" stroke-width="14" fill="none"/><path d="M560 560C620 590 680 560 730 600" stroke="#c9c6d0" stroke-width="16" fill="none"/><path d="M40 700C100 720 180 690 230 740" stroke="#cbc8d2" stroke-width="14" fill="none"/><path d="M60 820C200 800 400 860 700 820" stroke="#fff" stroke-width="18" fill="none"/><path d="M560 320C640 300 700 340 735 320" stroke="#fff" stroke-width="16" fill="none"/></g>
<!-- MISSING -->
<text x="104" y="267" textLength="592" lengthAdjust="spacingAndGlyphs" letter-spacing="30" font-family="'Liberation Sans',sans-serif" font-weight="700" font-size="264" fill="#3b3939" filter="url(#pdil)">MISSING</text>
<!-- inner photo -->
<g transform="translate(171.400 299.900) scale(.6854)">
<rect x="65" y="45" width="477" height="665" fill="url(#pph)"/>
<g filter="url(#pb2)">
<path d="M330 45H542V370L500 372 455 330 445 200 390 150 330 120z" fill="#8a8a8c"/>
<path d="M400 50L542 45V135L470 120 430 95z" fill="#4a4a4c"/>
<path d="M250 110L300 60 330 120 290 160 250 160z" fill="#9a9a9c"/>
<path d="M385 130L542 120V210L445 205z" fill="#ececee"/>
<path d="M455 285L542 270V372L460 362z" fill="#3c3c3e"/>
<path d="M65 140H190V190L140 225 65 232z" fill="#a9a9ab"/>
<path d="M65 258L128 262 152 300 150 345 65 355z" fill="#2e2e30"/>
<path d="M80 285l40 4v30l-40 2z" fill="#a5a5a7"/>
<path d="M65 560C200 545 300 610 540 575V640C400 660 200 640 65 650z" fill="#b4b4b6"/>
<path d="M240 560L300 640 330 700 290 690z" fill="#707072" opacity=".7"/>
<ellipse cx="520" cy="610" rx="14" ry="10" fill="#3a3a3c"/>
</g>
<rect x="65" y="45" width="477" height="665" fill="#000" filter="url(#pgrain)" opacity=".35"/>
<path d="M65 690H542V720H65z" fill="#e6e4ec" filter="url(#pb8)"/>
<!-- red figure -->
<g fill="#c9372e">
<path d="M296 120L380 110 378 128 370 130 372 200 300 200 302 132 296 132z"/>
<path d="M245 195L400 195 436 240 446 290 440 470 400 486 270 480 245 466 220 445 215 310 185 265 215 225z"/>
<path d="M272 478L400 484 398 560 380 712 354 712 345 590 336 580 330 705 300 702z"/>
</g>
<g fill="#8c211b" opacity=".55"><path d="M215 310L260 300 262 440 246 466 220 445z"/><path d="M300 700L330 705 328 720 302 716zM354 712L380 712 378 724 356 722z"/><circle cx="380" cy="350" r="6"/></g>
<path d="M245 195L400 195 436 240 446 290 440 470 400 486 270 480" fill="#d9483c" opacity=".35" filter="url(#pgrain)"/>
</g>
<!-- caption -->
<text x="246" y="901" textLength="270" lengthAdjust="spacingAndGlyphs" font-family="'Liberation Sans',sans-serif" font-weight="700" font-size="29" fill="#2f2d33" word-spacing="8">IN 50 METERS RADIUS</text>
<!-- teal tear (6x-zoom coords) -->
<g transform="translate(28.400 842.500) scale(.476)">
<path d="M12 178L40 198 80 184 108 146 140 104 200 108 216 128 262 124 330 144 420 170 520 190 600 210 650 224 700 224 760 208 800 228 866 257H12z" fill="#f4f2f8" filter="url(#pb2)"/>
<path d="M12 185L40 205 80 190 110 150 140 110 200 115 215 135 260 130 330 150 420 175 520 195 600 215 640 235 615 258H12z" fill="#45a9b0"/>
<path d="M110 150L140 110 200 115 215 140 205 185 130 200 100 180z" fill="#3b5c63"/>
<path d="M12 185L40 205 80 190 110 150 140 110 200 115 215 135 260 130 330 150 420 175 520 195 600 215 640 235 615 258H12z" fill="#000" filter="url(#pgrain2)" opacity=".5"/>
<path d="M612 258L640 228 700 230 760 214 800 234 862 258z" fill="#2a2a31"/>
<path d="M1479 60V258" stroke="#2b2b33" stroke-width="5" opacity=".75"/>
</g>
</svg></div>
    <!-- forest card -->
    <div class="card" id="forest" style="left:652px;top:501px;width:245px;height:178px"><svg class="abs" style="left:0;top:0" width="245" height="133" viewBox="25 25 1446 782" preserveAspectRatio="none">
<defs>
<radialGradient id="rsky" cx="700" cy="200" r="800" gradientUnits="userSpaceOnUse" gradientTransform="translate(0 40) scale(1 .8)"><stop offset="0" stop-color="#cdcfd2"/><stop offset=".4" stop-color="#babcbf"/><stop offset=".75" stop-color="#97999c"/><stop offset="1" stop-color="#66686a"/></radialGradient>
<filter id="rb4" filterUnits="userSpaceOnUse" x="-100" y="-100" width="1700" height="1100"><feGaussianBlur stdDeviation="4"/></filter>
<filter id="rb14" filterUnits="userSpaceOnUse" x="-100" y="-100" width="1700" height="1100"><feGaussianBlur stdDeviation="16"/></filter>
<filter id="rb30" filterUnits="userSpaceOnUse" x="-200" y="-200" width="1900" height="1300"><feGaussianBlur stdDeviation="34"/></filter>
<filter id="rfol" filterUnits="userSpaceOnUse" x="25" y="25" width="1446" height="782"><feTurbulence type="fractalNoise" baseFrequency=".055" numOctaves="4" seed="11" result="n"/><feColorMatrix in="n" type="matrix" values="0 0 0 0 .12  0 0 0 0 .12  0 0 0 0 .13  0 0 0 5 -2.600"/><feGaussianBlur stdDeviation="2.500"/></filter>
<radialGradient id="rfm" cx="700" cy="250" r="700" gradientUnits="userSpaceOnUse" gradientTransform="translate(0 60) scale(1 .75)"><stop offset="0" stop-color="#fff" stop-opacity=".12"/><stop offset=".5" stop-color="#fff" stop-opacity=".4"/><stop offset="1" stop-color="#fff" stop-opacity=".7"/></radialGradient><mask id="rmk"><rect x="25" y="25" width="1446" height="782" fill="url(#rfm)"/></mask>
</defs>
<rect x="25" y="25" width="1446" height="782" fill="url(#rsky)"/>
<!-- foggy crowns -->
<g filter="url(#rb30)" fill="#737578">
<ellipse cx="570" cy="470" rx="90" ry="190" opacity=".85"/><ellipse cx="660" cy="250" rx="50" ry="120" opacity=".6"/>
<ellipse cx="830" cy="300" rx="80" ry="230" opacity=".8"/><ellipse cx="1230" cy="200" rx="230" ry="200" fill="#55575a" opacity=".85"/>
<ellipse cx="270" cy="330" rx="90" ry="230" opacity=".55"/><ellipse cx="100" cy="440" rx="90" ry="200" fill="#555" opacity=".8"/>
<ellipse cx="1000" cy="640" rx="200" ry="150" fill="#4a4c4e" opacity=".9"/>
<ellipse cx="700" cy="700" rx="300" ry="80" fill="#5a5c5e" opacity=".8"/>
</g>
<!-- far trunks -->
<g filter="url(#rb4)">
<path d="M676 300L690 170 706 300 712 807H672z" fill="#2b2c2e"/>
<path d="M590 520L604 500 612 807H580z" fill="#3a3b3d"/>
<path d="M795 460L815 430 830 807H790z" fill="#3c3d3f"/>
<path d="M545 600L556 590 560 807H540z" fill="#444547"/>
<!-- mid foliage trunk -->
<path d="M860 140L900 170 960 330 1040 520 1110 700 1130 807H1000L960 600 920 400 880 250z" fill="#2a2b2d"/>
<!-- left secondary trunk -->
<path d="M330 300L390 250 300 500 200 807H110L220 560z" fill="#232425"/>
</g>
<g filter="url(#rb14)" fill="#2a2b2d" opacity=".85">
<ellipse cx="960" cy="420" rx="70" ry="200" transform="rotate(-16 960 420)"/>
<ellipse cx="1060" cy="680" rx="90" ry="130"/>
<ellipse cx="330" cy="470" rx="70" ry="190" transform="rotate(22 330 470)"/>
</g>
<g mask="url(#rmk)"><rect x="25" y="25" width="1446" height="782" filter="url(#rfol)"/></g>
<!-- big left trunk -->
<path d="M400 25H462L440 110 380 260 300 440 200 640 130 807H25V660L120 520 250 300 350 110z" fill="#141415" filter="url(#rb4)"/>
<!-- big right trunk -->
<path d="M905 25H990L1040 150 1110 300 1190 440 1280 560 1360 700 1420 807H1280L1230 690 1150 540 1070 380 1000 220 950 110z" fill="#0b0b0c" filter="url(#rb4)"/>
<!-- right thin trunk -->
<path d="M1190 25H1250L1330 110 1471 260V340L1380 230 1290 130z" fill="#222325" filter="url(#rb4)"/>
<!-- right dark foliage -->
<path d="M1230 440L1330 420 1471 440V807H1300z" fill="#0c0c0d" filter="url(#rb14)"/>
<!-- top-left leaves -->
<g filter="url(#rb4)" fill="#101011">
<path d="M25 25H760L740 60 650 50 600 80 520 45 470 70 380 60 330 100 280 60 200 110 215 180 170 200 190 260 130 250 90 300 25 260z"/>
<path d="M25 300L70 330 60 400 25 430z"/>
</g>
<g filter="url(#rb14)" fill="#18181a" opacity=".8"><ellipse cx="110" cy="160" rx="110" ry="110"/><ellipse cx="420" cy="45" rx="330" ry="32"/></g>
<!-- bottom bushes -->
<path d="M25 740L130 700 250 770 350 730 420 690 520 720 560 770 640 790 760 800 900 790 1000 800 1200 780 1471 790V807H25z" fill="#070708" filter="url(#rb4)"/>
<path d="M25 600L140 560 230 640 260 760 25 807z" fill="#0d0d0e" filter="url(#rb14)"/>
</svg>
      <div class="t" style="left:17px;top:151px;font-size:9.500px;letter-spacing:.09px;color:#3c4350">Hidden tunnels under the town</div>
    </div>
    <!-- face -->
    <div class="card" id="face" style="left:914px;top:143px;width:222px;height:230px;background:#030305"><svg class="abs" style="left:0;top:0" width="222" height="230" viewBox="15 20 927 957" preserveAspectRatio="none">
<defs>
<radialGradient id="ffh" cx="430" cy="200" r="260" gradientUnits="userSpaceOnUse" gradientTransform="translate(0 60) scale(1 .7)"><stop offset="0" stop-color="#7c7c7c"/><stop offset=".45" stop-color="#5e5e5e"/><stop offset=".8" stop-color="#333"/><stop offset="1" stop-color="#101010"/></radialGradient>
<filter id="fb6" filterUnits="userSpaceOnUse" x="-300" y="-300" width="1900" height="1900"><feGaussianBlur stdDeviation="12"/></filter>
<filter id="fb14" filterUnits="userSpaceOnUse" x="-300" y="-300" width="1900" height="1900"><feGaussianBlur stdDeviation="28"/></filter>
<radialGradient id="ffh2" cx="390" cy="250" r="520" gradientUnits="userSpaceOnUse"><stop offset="0" stop-color="#9c9c9d"/><stop offset=".35" stop-color="#7e7e7f"/><stop offset=".7" stop-color="#5a5a5b"/><stop offset="1" stop-color="#3c3c3d"/></radialGradient>
<filter id="fb4" filterUnits="userSpaceOnUse" x="-200" y="-200" width="1600" height="1600"><feGaussianBlur stdDeviation="7"/></filter>
</defs>
<rect x="15" y="20" width="927" height="957" fill="#030305"/>
<g transform="translate(166.600 37.500) scale(.5833)">
<!-- hair -->
<path d="M230 210C300 90 500 30 680 110 760 150 800 200 820 260 700 150 400 120 230 210z" fill="#0d0d0e" filter="url(#fb6)"/>
<!-- head base -->
<path d="M150 560C140 380 200 210 330 155 480 120 660 140 770 210 850 300 890 480 890 700L880 830H165z" fill="#161617" filter="url(#fb6)"/>
<!-- forehead lit -->
<path d="M158 560C150 400 200 230 330 165 480 130 650 150 760 205 820 300 860 420 862 520 800 440 700 420 560 470 520 520 470 490 350 480 220 505 158 560z" fill="url(#ffh2)" filter="url(#fb4)"/>
<!-- right temple rim -->
<path d="M770 215C850 320 890 480 890 690 870 560 840 420 800 330z" fill="#5c5c5c" filter="url(#fb6)"/>
<!-- left cheek -->
<path d="M165 620C200 690 330 720 450 700L440 840H170z" fill="#2d2d2e" filter="url(#fb14)"/>
<path d="M170 560L215 515 200 640 175 700z" fill="#3c3c3d" filter="url(#fb6)"/>
<!-- eye sockets -->
<ellipse cx="325" cy="585" rx="135" ry="78" fill="#040405" filter="url(#fb6)"/>
<path d="M545 500C620 440 760 420 840 470 880 560 880 700 860 800H640L560 700z" fill="#050506" filter="url(#fb6)"/>
<!-- nose -->
<path d="M488 520L535 525 560 690 640 755 560 785 440 775 468 700 486 610z" fill="#4e4e4f" filter="url(#fb4)"/>
<path d="M492 530L522 535 530 690 470 750 450 770 470 700 488 610z" fill="#7a7a7b" filter="url(#fb4)"/>
<path d="M440 775L560 785 640 758 610 850H450z" fill="#050506" filter="url(#fb4)"/>
<!-- ears -->
<path d="M88 660C100 640 140 650 152 680L160 820 125 790z" fill="#3a3a3b" filter="url(#fb4)"/>
<path d="M900 560C920 535 960 545 958 580L950 780 905 790z" fill="#1e1e1f" filter="url(#fb4)"/>
<path d="M912 552C930 540 955 548 956 570" stroke="#6a6a6a" stroke-width="10" fill="none" filter="url(#fb4)"/>
</g>
<!-- scribble -->
<g fill="none" stroke="#808285" stroke-linecap="round" stroke-linejoin="round" stroke-width="17">
<path d="M135 522L330 540 500 552 640 495 520 560 770 505 700 545 770 525 560 575 810 580 115 575 250 590 520 588 780 600 760 612 430 610 210 612 160 632 300 622 480 600 640 600 330 640 195 662 320 676 430 640 540 618 700 610"/>
<path d="M270 532L500 560 330 560 600 570 300 580 700 590 250 604 600 610 380 625 250 640 240 655 400 630" stroke-width="19"/>
</g>
</svg></div>
    <!-- symbol -->
    <div class="card" id="symbol" style="left:914px;top:389px;width:147px;height:147px"><svg class="abs" style="left:0;top:0" width="147" height="147" viewBox="0 0 147 147">
<defs><g id="xp"><path d="M-1 -7.500h2v15h-2zM-7.500 -1h15v2h-15zM-4.200 -8.600l4.200 3.400 4.200-3.400zM-4.200 8.600l4.200-3.400 4.200 3.400zM-8.600 -4.200l3.400 4.200-3.400 4.200zM8.600 -4.200l-3.400 4.200 3.400 4.200z"/></g></defs>
<rect width="147" height="147" fill="#fdfdfd"/>
<g fill="none" stroke="#111" stroke-width="1.300" stroke-linejoin="round">
<ellipse cx="72.300" cy="90" rx="55.300" ry="64.500"/>
<path d="M10.700 147L72 26.500 139.600 147"/>
<path d="M79.200 147L26 55H120L71 147"/>
</g>
<g fill="#111">
<path d="M71 14h2.200v12h-2.200zM66.500 14h11v1.700h-11zM63.200 16.200l3.600 2.600v2.400l-3.600 2.800zM81 16.200l-3.600 2.600v2.400l3.600 2.800zM66 19.200h12.500v1.800h-12.500z"/>
<use href="#xp" transform="translate(18 52.500) rotate(-38)"/>
<use href="#xp" transform="translate(126.500 52) rotate(38)"/>
</g>
<g font-family="'Liberation Serif',serif" font-weight="700" fill="#111">
<text x="43" y="50" font-size="10.500" font-style="italic">A</text>
<text x="65" y="50" font-size="9.500" textLength="16.500" lengthAdjust="spacingAndGlyphs">TE</text>
<text x="93.500" y="50" font-size="10.500" font-style="italic">G</text>
<text x="31" y="64" font-size="7.800" textLength="18.500" lengthAdjust="spacingAndGlyphs" transform="rotate(5 40 62)">TRA</text>
<text x="94.500" y="64.500" font-size="7.600" font-style="italic" textLength="22" lengthAdjust="spacingAndGlyphs" transform="rotate(-3 106 62)">GRAM</text>
<text x="22" y="89.500" font-size="19" font-style="italic" font-weight="400">A</text>
<text x="111" y="87" font-size="18.500">Ω</text>
</g>
<g fill="none" stroke="#111" stroke-width="1.500" stroke-linejoin="round">
<path d="M61.500 71.500H85.500V82H79.500V94.500H69V82H61.500z"/>
<rect x="65" y="75" width="3.300" height="3" stroke-width="1"/><rect x="79" y="75" width="3.300" height="3" stroke-width="1"/><rect x="72.500" y="88" width="3.300" height="3" stroke-width="1"/>
</g>
</svg></div>
    <!-- hidden dark image behind popup -->
    <div class="card" style="left:914px;top:554px;width:200px;height:170px;background:#121214"></div>
    <!-- fog -->
    <div class="card" id="fog" style="left:1078px;top:307px;width:252px;height:200px;background:#cfc6cb"><svg class="abs" style="left:0;top:0" width="252" height="200" viewBox="40 50 1260 1000" preserveAspectRatio="none">
<defs>
<radialGradient id="gfog" cx="840" cy="330" r="640" gradientUnits="userSpaceOnUse"><stop offset="0" stop-color="#dcd1d6"/><stop offset=".45" stop-color="#d3c9ce"/><stop offset=".75" stop-color="#bcb4b9"/><stop offset="1" stop-color="#918d92"/></radialGradient>
<linearGradient id="gfl" x1="40" y1="0" x2="620" y2="0" gradientUnits="userSpaceOnUse"><stop offset="0" stop-color="#262c30"/><stop offset=".3" stop-color="#3b4144"/><stop offset=".6" stop-color="#585c5f"/><stop offset="1" stop-color="#858488"/></linearGradient>
<linearGradient id="gfr" x1="1000" y1="0" x2="1300" y2="0" gradientUnits="userSpaceOnUse"><stop offset="0" stop-color="#8e8c90"/><stop offset=".5" stop-color="#5c5f62"/><stop offset="1" stop-color="#2c3236"/></linearGradient>
<filter id="gdis" filterUnits="userSpaceOnUse" x="-100" y="-100" width="1600" height="1300"><feTurbulence type="fractalNoise" baseFrequency=".025" numOctaves="3" seed="3" result="n"/><feDisplacementMap in="SourceGraphic" in2="n" scale="46" xChannelSelector="R" yChannelSelector="G"/><feGaussianBlur stdDeviation="2.500"/></filter>
<filter id="gb20" filterUnits="userSpaceOnUse" x="-200" y="-200" width="1800" height="1500"><feGaussianBlur stdDeviation="24"/></filter>
</defs>
<rect x="40" y="50" width="1260" height="1000" fill="url(#gfog)"/>
<path d="M40 50H470L400 200 540 380 460 520 590 640 520 800 440 1050H40z" fill="#50555a" opacity=".7" filter="url(#gb20)"/>
<g filter="url(#gdis)">
<path d="M0 50H440L400 90 330 110 420 130 515 150 450 185 490 200 410 235 360 260 480 250 400 300 300 330 420 345 545 365 500 395 550 420 600 445 520 470 440 500 490 520 400 560 480 580 530 610 600 630 560 670 575 720 545 770 500 790 440 830 400 880 370 950 360 1100H0z" fill="url(#gfl)"/>
<path d="M420 880C470 860 540 830 580 860 600 900 640 930 650 1100H380z" fill="#8f8d91" opacity=".6"/>
<path d="M1340 50V1100H1130L1060 930 1100 880 1060 870 1110 800 1080 760 1130 740 1100 690 1160 650 1090 620 1010 570 1120 590 1220 610 1260 560 1290 520 1270 480 1210 420 1100 340 1200 360 1290 380 1260 300 1340 280z" fill="url(#gfr)"/>
<path d="M1340 30L1265 50 1300 80 1340 90zM1340 220L1270 215 1235 150 1160 120 1240 125 1240 100 1340 140z" fill="#565a5d"/>
</g>
<g filter="url(#gb20)" opacity=".35" fill="#b9b2b6"><ellipse cx="300" cy="120" rx="160" ry="60"/></g>
<path d="M40 50H130V1050H40z" fill="#23292d" opacity=".6" filter="url(#gb20)"/>
<path d="M40 720H280L240 1050H40z" fill="#23292d" opacity=".8" filter="url(#gb20)"/>
</svg></div>
    <!-- comment pin -->
    <svg class="abs" style="left:866px;top:516px" width="34" height="40" viewBox="0 0 34 40"><path d="M16.900 38L6.300 27.500a15.100 15.100 0 1 1 21.200 0z" fill="#3567f5"/></svg>
    <div class="t" style="left:866px;top:525.800px;width:33.800px;text-align:center;font-size:17px;font-weight:400;color:#fff;-webkit-text-stroke:.45px #fff">2</div>
  </div>
</div>
<!-- popup placeholder -->
<div id="popup" class="abs" style="left:966px;top:536px;width:500px;height:261px;background:#f4f6fe;box-shadow:0 14px 50px rgba(20,20,40,.24),0 2px 8px rgba(20,20,40,.1)">
  <svg class="abs" style="left:-10px;top:34.700px" width="11" height="21" viewBox="0 0 11 21"><path d="M11 0v21L.8 10.500z" fill="#f4f6fe"/></svg>
  <div class="abs" id="av1" style="left:35px;top:30px;width:35px;height:35px;border-radius:50%;overflow:hidden;background:#5b4a48"><svg width="35" height="35" viewBox="135 115 690 695" style="display:block"><defs><filter id="a1b" filterUnits="userSpaceOnUse" x="0" y="0" width="1000" height="1000"><feGaussianBlur stdDeviation="13"/></filter></defs>
<rect x="135" y="115" width="690" height="695" fill="#b9b2b7"/>
<g filter="url(#a1b)">
<path d="M200 350h110v330h-110z" fill="#a9d3e2"/><path d="M135 430h80v200h-80z" fill="#9c9498"/>
<path d="M690 250h140v150h-140z" fill="#b09a98"/><path d="M780 340h45v170h-45z" fill="#0c0c0c"/>
<path d="M330 270L520 280 610 520 530 610 400 615 340 500 318 380z" fill="#d8a88f"/>
<path d="M205 230C300 170 420 150 560 170 700 200 770 300 760 420 750 520 700 580 640 560 600 520 590 420 560 350 500 290 400 270 300 295 240 300 205 270 205 230z" fill="#111113"/>
<path d="M318 255L430 275 405 400 425 480 360 565 318 430z" fill="#e0483e"/>
<path d="M420 400h60v22h-60z" fill="#3a2a2a"/>
<path d="M355 535L425 548 380 590z" fill="#c41d18"/>
<path d="M470 600L600 555 610 650 500 690z" fill="#c99a82"/>
<path d="M590 400l30 0 0 120-30 0z" fill="#c43a30"/>
<path d="M300 720L470 690 620 620 745 680 700 780 500 815 320 790z" fill="#111113"/>
<path d="M365 690L480 655 525 770 400 800z" fill="#e0504a"/>
</g></svg></div>
  <div class="t" id="sarah" style="left:94px;top:43px;font-size:18px;font-weight:700;color:#333a48">Sarah</div>
  <div class="t" id="day" style="left:156px;top:43px;font-size:18px;color:#a3a6ac">1 day</div>
  <div class="t" id="c1" style="left:94px;top:78px;font-size:18px;color:#3b4250;letter-spacing:.85px"><b style="color:#3b6cf6;letter-spacing:.45px">@Steven</b> This image captures the feeling</div>
  <div class="t" id="c2" style="left:94px;top:108px;font-size:18px;color:#3b4250;letter-spacing:.87px">of the tunnels perfectly. The darkness and</div>
  <div class="t" id="c3" style="left:94px;top:138px;font-size:18px;color:#3b4250;letter-spacing:.7px">inability to see ahead.</div>
  <div class="abs" id="av2" style="left:34px;top:188px;width:36px;height:36px;border-radius:50%;overflow:hidden;background:#6a5a50"><svg width="36" height="36" viewBox="145 140 715 715" style="display:block"><defs><filter id="a2b" filterUnits="userSpaceOnUse" x="0" y="0" width="1000" height="1000"><feGaussianBlur stdDeviation="14"/></filter></defs>
<rect x="145" y="140" width="715" height="715" fill="#c6c5ca"/>
<g filter="url(#a2b)">
<path d="M100 100H900V330L640 400 380 400 240 360 100 420z" fill="#b98c6c"/>
<path d="M720 220H900V640H780L700 500z" fill="#5e443b"/>
<path d="M640 440L860 420V560L660 520z" fill="#8d8d93"/>
<path d="M150 420L380 440 370 600 150 620z" fill="#d5d5da"/>
<path d="M385 260C400 200 600 200 625 260L650 400 620 520 540 585 470 585 405 520 375 400z" fill="#e2b9a8"/>
<path d="M372 300C370 200 450 170 520 180 600 180 650 230 640 310 600 250 520 235 470 240 420 245 390 270 372 300z" fill="#33241f"/>
<path d="M380 355H650V378H380z" fill="#3d2a28"/>
<path d="M440 545h120v30h-120z" fill="#7a2a28"/>
<path d="M420 580L600 575 610 700 430 700z" fill="#d7a48e"/>
<path d="M230 720L400 640 520 720 640 640 800 700 760 870 300 870z" fill="#474144"/>
<path d="M380 610L460 700 400 720 350 660zM640 600L560 700 620 720 680 650z" fill="#e8e8ec"/>
<path d="M560 820L700 670 740 700 620 860z" fill="#b22d2b"/>
</g></svg></div>
  <div class="abs" style="left:81px;top:185px;width:394px;height:47px;border-radius:6px;background:#fff"></div>
  <div class="t" id="reply" style="left:95px;top:199px;font-size:18px;color:#3b4250;letter-spacing:.79px">Agreed! It sets the tone nicely.</div>
  <div class="t" id="send" style="left:414px;top:200px;font-size:18px;letter-spacing:.25px;font-weight:700;color:#3b6cf6">Send</div>
</div>
</body>
</html>
